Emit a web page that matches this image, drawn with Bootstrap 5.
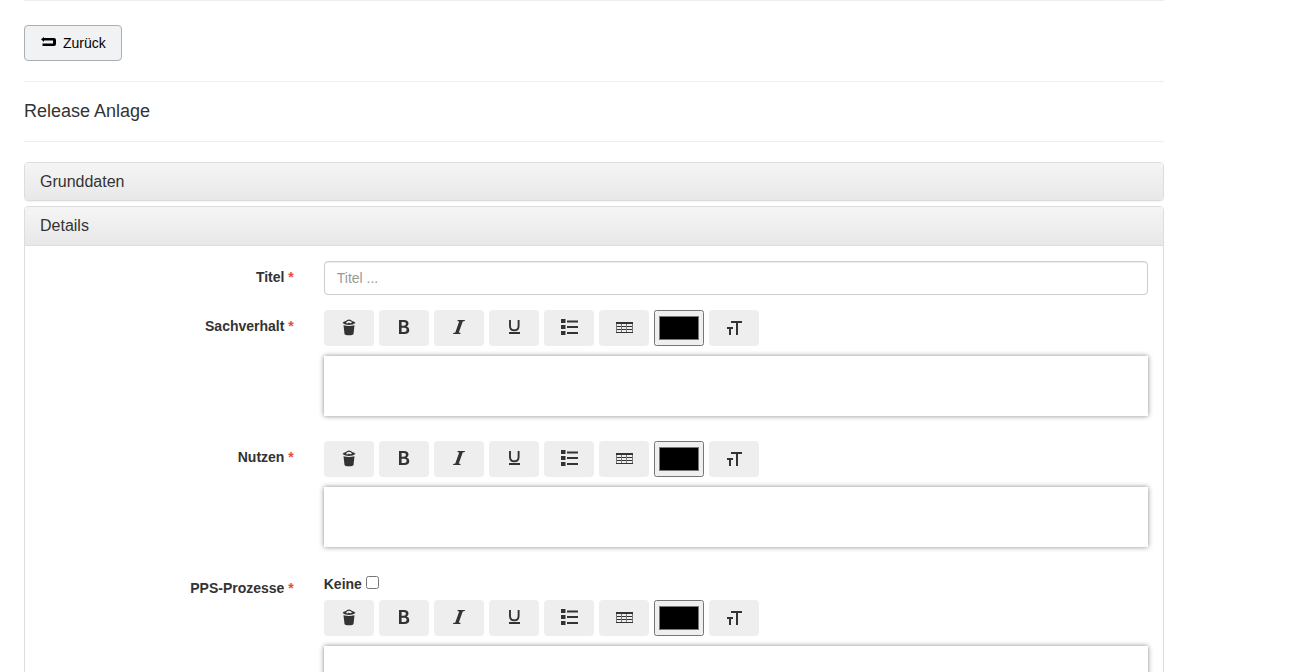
<!DOCTYPE html>
<html lang="de">
<head>
<meta charset="utf-8">
<meta name="viewport" content="width=device-width, initial-scale=1">
<title>Release Anlage</title>
<link rel="stylesheet" href="https://cdn.jsdelivr.net/npm/bootstrap@5.3.0/dist/css/bootstrap.min.css">
<style>
  body { font: 14px/20px "Liberation Sans", Arial, sans-serif; color: #333; background: #fff; }
  .page-shell { max-width: 1164px; padding-left: 24px; }
  hr { margin: 0; border-top: 1px solid #eee; opacity: 1; }
  .back-bar { padding: 24px 0 20px; }
  .btn-back { --bs-btn-font-size: 14px; --bs-btn-line-height: 20px; --bs-btn-padding-x: 16px; --bs-btn-padding-y: 7px;
    --bs-btn-color: #000; --bs-btn-bg: #f1f2f4; --bs-btn-border-color: #a9afb5; --bs-btn-border-radius: 4px;
    --bs-btn-hover-color: #000; --bs-btn-hover-bg: #e4e6e9; --bs-btn-hover-border-color: #a9afb5; min-width: 98px; padding-right: 12px; gap: 7px; }
  .page-title { font-size: 18px; line-height: 20px; font-weight: 400; margin: 0; padding: 19px 0 20px; }
  .panel-box { border: 1px solid #ddd; border-radius: 4px; box-shadow: 0 1px 1px rgba(0,0,0,.05); }
  .panel-list { display: grid; gap: 5px; padding-top: 20px; }
  .panel-top { font-size: 16px; line-height: 17px; font-weight: 400; padding: 10px 15px; margin: 0; border-radius: 3px;
    background: linear-gradient(#f5f5f5, #e8e8e8); }
  .panel-open { border-bottom: 1px solid #ddd; padding-bottom: 11px; border-radius: 3px 3px 0 0; }
  .panel-content { padding: 15px 15px 15px 14px; }
  .panel-content .row { --bs-gutter-x: 30px; }
  .row-title { margin-bottom: 15px; }
  .field-label { padding-top: 6px; font-weight: 700; text-align: right; }
  .field-label span { color: #e74c3c; }
  .field-input { height: 34px; padding: 6px 12px; font-size: 14px; line-height: 20px; border: 1px solid #ccc; border-radius: 4px;
    box-shadow: inset 0 1px 1px rgba(0,0,0,.075); }
  .field-input::placeholder { color: #999; }
  .tools { gap: 5px; margin-bottom: 10px; }
  .tool { --bs-btn-padding-x: 0; --bs-btn-padding-y: 0; --bs-btn-bg: #eee; --bs-btn-color: #333; --bs-btn-border-width: 0;
    --bs-btn-border-radius: 4px; --bs-btn-hover-bg: #ddd; --bs-btn-hover-color: #333; width: 50px; height: 36px;
    display: flex; align-items: center; justify-content: center; }
  .tool-color { width: 50px; height: 36px; }
  .tool-color::-webkit-color-swatch-wrapper { padding: 4px 2px; }
  .editor { height: 60px; background: #fff; box-shadow: 0 0 5px #888; outline: 0; margin-bottom: 25px; }
  .check-line { height: 28px; padding-top: 2px; font-weight: 700; }
  .check-line input { width: 13px; height: 13px; margin: 2px 0 0 4px; }
</style>
</head>
<body class="vh-100 overflow-hidden">
<svg class="d-none" aria-hidden="true">
  <symbol id="i-trash" viewBox="0 0 18 18"><path fill="currentColor" fill-rule="evenodd" d="M2.500 4Q3.300 2.500 6 2Q6.700 .5 9 .5T12 2Q14.700 2.500 15.500 4q-2.500 2-6.500 2T2.500 4Zm3.500 0L7.500 4.500l1.300-1.100 1 .9 1.400-.2.800-.5Q11 1.700 9 1.700T6 4ZM3.500 6.200Q9 7.600 14.500 6.200L13.500 15Q13 16.300 9 16.300T4.500 15Z"/></symbol>
  <symbol id="i-bold" viewBox="0 0 18 18"><path fill="currentColor" fill-rule="evenodd" d="M4 1h5q4.500 0 4.500 3.600 0 2.200-1.800 3Q14.300 8.400 14.300 11q0 4-5 4H4ZM6.600 3v3.700h2q2.400 0 2.400-1.900T8.700 3Zm0 5.700V13h2.500q2.600 0 2.600-2.200T9 8.700Z"/></symbol>
  <symbol id="i-italic" viewBox="0 0 18 18"><path fill="currentColor" d="M7.700 1H15l-.3 1.100-2 .3L8.800 13.600l1.800.3-.3 1.100H3l.3-1.100 2-.3L9.200 2.400 7.400 2.100Z"/></symbol>
  <symbol id="i-underline" viewBox="0 0 18 18"><path fill="none" stroke="currentColor" stroke-width="1.900" d="M5 1v6q0 4.300 4.300 4.300T13.600 7V1"/><path fill="currentColor" d="M4 13h11v2H4Z"/></symbol>
  <symbol id="i-list" viewBox="0 0 18 18"><path fill="currentColor" d="M1 0h4.500v4H1Zm0 6h4.500v4H1Zm0 6h4.500v4H1ZM7 1.500h11v2H7Zm0 5.500h11v2H7Zm0 6h11v2H7Z"/></symbol>
  <symbol id="i-table" viewBox="0 0 18 18"><path fill="currentColor" d="M1 3h17v2H1Zm0 4h17v1H1Zm0 3h17v1H1Zm0 3h17v1H1Z"/><path fill="#777" d="M1 5h1v8H1ZM6 5h1v8H6ZM11 5h1v8h-1ZM17 5h1v8h-1Z"/></symbol>
  <symbol id="i-size" viewBox="0 0 18 18"><path fill="currentColor" d="M6 2h11v2h-4v12h-2V4H6ZM2 8h6v2H6v6H4v-6H2Z"/></symbol>
</svg>

<template id="tools-template">
  <button type="button" class="btn tool" aria-label="Leeren"><svg width="18" height="18"><use href="#i-trash"/></svg></button>
  <button type="button" class="btn tool" aria-label="Fett"><svg width="18" height="18"><use href="#i-bold"/></svg></button>
  <button type="button" class="btn tool" aria-label="Kursiv"><svg width="18" height="18"><use href="#i-italic"/></svg></button>
  <button type="button" class="btn tool" aria-label="Unterstrichen"><svg width="18" height="18"><use href="#i-underline"/></svg></button>
  <button type="button" class="btn tool" aria-label="Liste"><svg width="18" height="18"><use href="#i-list"/></svg></button>
  <button type="button" class="btn tool" aria-label="Tabelle"><svg width="18" height="18"><use href="#i-table"/></svg></button>
  <input type="color" class="tool-color" value="#000000" aria-label="Textfarbe">
  <button type="button" class="btn tool" aria-label="Schriftgröße"><svg width="18" height="18"><use href="#i-size"/></svg></button>
</template>

<main class="page-shell">
  <hr>
  <div class="back-bar d-flex">
    <button type="button" class="btn btn-back d-flex align-items-center">
      <svg width="15" height="12" viewBox="0 0 15 12" aria-hidden="true"><path fill="currentColor" d="M3 0v1h10q2 0 2 2v4q0 2-2 2H1.500V6.500H12v-3H3V5L0 2.300Z"/></svg>
      Zurück
    </button>
  </div>
  <hr>
  <h1 class="page-title">Release Anlage</h1>
  <hr>
  <div class="panel-list">
  <section class="panel-box"><h2 class="panel-top">Grunddaten</h2></section>
  <section class="panel-box">
    <h2 class="panel-top panel-open">Details</h2>
    <form class="panel-content">
      <div class="row row-title">
        <label class="col-3 field-label" for="titel">Titel <span>*</span></label>
        <div class="col-9"><input type="text" class="form-control field-input" id="titel" placeholder="Titel ..."></div>
      </div>
      <div class="row">
        <label class="col-3 field-label" id="l-sach">Sachverhalt <span>*</span></label>
        <div class="col-9"><div class="d-flex tools"></div><div class="editor" contenteditable="true" role="textbox" aria-labelledby="l-sach"></div></div>
      </div>
      <div class="row">
        <label class="col-3 field-label" id="l-nutzen">Nutzen <span>*</span></label>
        <div class="col-9"><div class="d-flex tools"></div><div class="editor" contenteditable="true" role="textbox" aria-labelledby="l-nutzen"></div></div>
      </div>
      <div class="row">
        <label class="col-3 field-label" id="l-pps">PPS-Prozesse <span>*</span></label>
        <div class="col-9">
          <div class="check-line d-flex align-items-start"><label for="keine">Keine</label><input type="checkbox" id="keine"></div>
          <div class="d-flex tools"></div><div class="editor" contenteditable="true" role="textbox" aria-labelledby="l-pps"></div>
        </div>
      </div>
    </form>
  </section>
  </div>
</main>
<script src="https://cdn.jsdelivr.net/npm/bootstrap@5.3.0/dist/js/bootstrap.bundle.min.js"></script>
<script>
  const tools = document.getElementById('tools-template');
  document.querySelectorAll('.tools').forEach(bar => bar.append(tools.content.cloneNode(true)));
</script>
</body>
</html>
